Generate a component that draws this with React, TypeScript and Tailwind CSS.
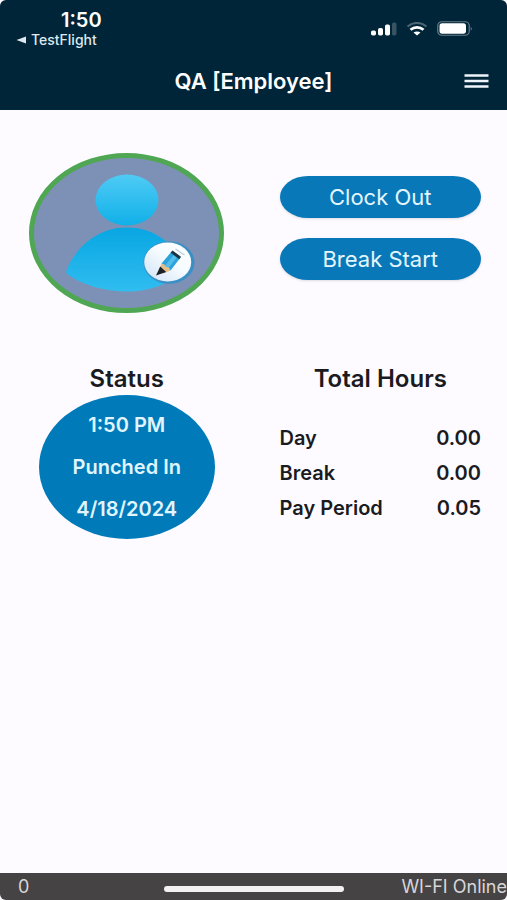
const hours = [
  { label: "Day", value: "0.00" },
  { label: "Break", value: "0.00" },
  { label: "Pay Period", value: "0.05" },
];

function SignalIcon() {
  return (
    <svg width="26" height="14" viewBox="0 0 26 14" fill="#fff" aria-hidden="true">
      <rect x="0" y="8.5" width="5" height="5" rx="1.8" />
      <rect x="7" y="6" width="5" height="7.5" rx="1.8" />
      <rect x="14" y="2.5" width="5" height="11" rx="1.8" />
      <rect x="21" y="0.5" width="4.5" height="13" rx="1.8" opacity="0.22" />
    </svg>
  );
}

function WifiIcon() {
  return (
    <svg width="22" height="14" viewBox="0 0 22 14" fill="none" aria-hidden="true">
      <path d="M1.5 4.5C7 -0.3 15 -0.3 20.5 4.5" stroke="#fff" strokeWidth="2" opacity="0.3" />
      <path d="M4.500 7.800C8.300 4.500 13.700 4.500 17.500 7.800" stroke="#fff" strokeWidth="2.800" />
      <path d="M7.500 10.600C9.600 9 12.400 9 14.500 10.600L11 13.600Z" fill="#fff" />
    </svg>
  );
}

function BatteryIcon() {
  return (
    <svg width="36" height="15" viewBox="0 0 36 15" aria-hidden="true">
      <rect x="0.75" y="0.75" width="31.5" height="13.5" rx="4" fill="none" stroke="#fff" strokeWidth="1.2" opacity="0.4" />
      <rect x="2.5" y="2.3" width="26.5" height="10.4" rx="2.6" fill="#fff" />
      <path d="M33.8 5.2Q35.5 7.5 33.8 9.8Z" fill="#fff" opacity="0.5" />
    </svg>
  );
}

function Avatar() {
  return (
    <svg width="195" height="160" viewBox="0 0 195 160" role="img" aria-label="Profile picture">
      <defs>
        <linearGradient id="head" x1="0" y1="0" x2="0" y2="1">
          <stop offset="0" stopColor="#4fcbf5" />
          <stop offset="1" stopColor="#10b0e8" />
        </linearGradient>
        <linearGradient id="body" x1="0" y1="0" x2="0" y2="1">
          <stop offset="0" stopColor="#08a6e2" />
          <stop offset="1" stopColor="#30bdf0" />
        </linearGradient>
        <linearGradient id="badge" x1="0" y1="1" x2="1" y2="0">
          <stop offset="0" stopColor="#cfe2f6" />
          <stop offset="0.55" stopColor="#f6fbff" />
          <stop offset="1" stopColor="#fff" />
        </linearGradient>
      </defs>
      <ellipse cx="97.5" cy="80" rx="95" ry="77.5" fill="#7d91b6" stroke="#4fa653" strokeWidth="5" />
      <ellipse cx="98" cy="47" rx="31.5" ry="25.5" fill="url(#head)" />
      <path d="M38 116C46 97 66 74.500 98 74.500C130 74.500 150 97 158 116C139 132 120 138.500 98 138.500C75 138.500 54 132 38 121Q36.500 119 38 116Z" fill="url(#body)" />
      <ellipse cx="140" cy="109.500" rx="25.500" ry="21.300" fill="#3a90c5" />
      <ellipse cx="138.700" cy="109" rx="23.500" ry="19.500" fill="url(#badge)" />
      <path d="M146.500 96L155.500 102" stroke="#b9cbe0" strokeWidth="1.200" />
      <path d="M143 98L151.500 104.500L141.500 117.500L132.500 110.500Z" fill="#28a3dc" />
      <path d="M146 100.500L149 103L139 115.500L135.800 113Z" fill="#55bdea" />
      <path d="M143.500 97.500L152 103.700L150.300 106.300L141.700 99.800Z" fill="#1d3345" />
      <path d="M132.500 110.500L135.500 111.500L137 114L140 114.500L141.500 117.500L134 120.500L130 117Z" fill="#e3bd8c" />
      <path d="M131.200 113.500L137.200 119L127 122.500Z" fill="#1c2126" />
    </svg>
  );
}

export default function App() {
  return (
    <div className="flex min-h-screen flex-col bg-[#fdfbff] font-['Inter',sans-serif] text-[#1b1b1f]">
      <header className="rounded-t-md bg-[#002538] text-white">
        <div className="flex h-[52px] items-start justify-between pr-[34px] pl-4">
          <div className="pt-2">
            <p className="pl-[45px] text-xl leading-6 font-semibold">1:50</p>
            <a href="#testflight" className="flex items-center gap-1 text-sm leading-4 font-medium text-[#dfe8ee]">
              <svg width="11" height="8" viewBox="0 0 11 8" fill="currentColor" aria-hidden="true">
                <path d="M0.500 4L10 0.500V7.500Z" />
              </svg>
              TestFlight
            </a>
          </div>
          <div className="flex items-center gap-[9px] pt-[21px]">
            <SignalIcon />
            <WifiIcon />
            <BatteryIcon />
          </div>
        </div>
        <div className="grid h-[58px] grid-cols-[1fr_auto_1fr] items-center px-[18px]">
          <h1 className="col-start-2 text-[22px] leading-6 font-semibold">QA [Employee]</h1>
          <button type="button" aria-label="Menu" className="justify-self-end">
            <svg width="25" height="14" viewBox="0 0 25 14" fill="none" stroke="#eef5fa" strokeWidth="2.400" aria-hidden="true">
              <path d="M0.500 1.500H24.500M0.500 7H24.500M0.500 12.500H24.500" />
            </svg>
          </button>
        </div>
      </header>

      <main className="grid grow grid-cols-2 content-start gap-y-[52px] pt-[43px]">
        <div className="flex justify-center">
          <Avatar />
        </div>
        <div className="flex flex-col gap-5 px-[26px] pt-[23px]">
          <button type="button" className="h-[42px] rounded-[28px/21px] bg-[#0878b8] text-[22px] text-[#e4f6ff] shadow-sm">
            Clock Out
          </button>
          <button type="button" className="h-[42px] rounded-[28px/21px] bg-[#0878b8] text-[22px] text-[#e4f6ff] shadow-sm">
            Break Start
          </button>
        </div>

        <section className="flex flex-col items-center">
          <h2 className="text-2xl leading-7 font-semibold">Status</h2>
          <div className="mt-0.5 flex h-[144px] w-[176px] flex-col items-center justify-center gap-[18px] rounded-[50%] bg-[#007ab8] text-xl leading-6 font-semibold text-[#e0f5ff]">
            <p>1:50 PM</p>
            <p>Punched In</p>
            <p>4/18/2024</p>
          </div>
        </section>
        <section className="px-[26px]">
          <h2 className="text-center text-2xl leading-7 font-semibold">Total Hours</h2>
          <table className="mt-7 w-full text-xl leading-[35px] font-semibold">
            <tbody>
              {hours.map((row) => (
                <tr key={row.label}>
                  <th scope="row" className="p-0 text-left font-semibold">{row.label}</th>
                  <td className="p-0 text-right">{row.value}</td>
                </tr>
              ))}
            </tbody>
          </table>
        </section>
      </main>

      <footer className="grid h-[27px] grid-cols-[minmax(0,1fr)_180px_minmax(0,1fr)] items-center rounded-b-md bg-[#464344] text-lg leading-6 text-[#d8d6d7]">
        <span className="pl-[18px]">0</span>
        <span className="mt-1 h-[6px] rounded-full bg-[#f3f1f2]" />
        <span className="text-right">WI-FI Online</span>
      </footer>
    </div>
  );
}
